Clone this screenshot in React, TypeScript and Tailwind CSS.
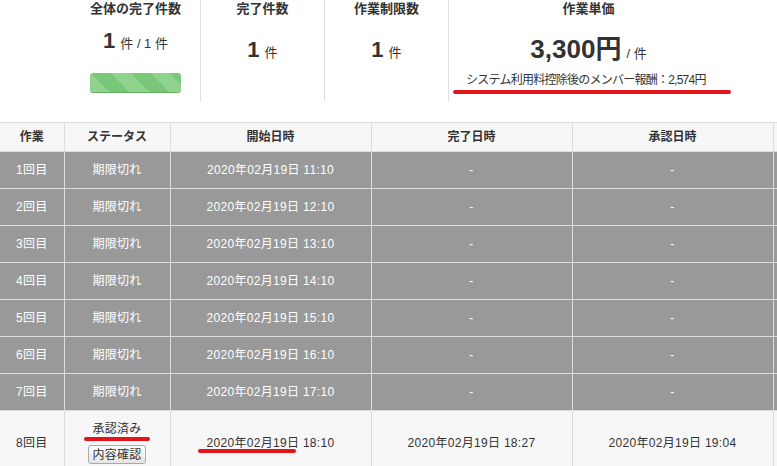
import React from "react";

const font = "font-['Liberation_Sans','Noto_Sans_CJK_JP',sans-serif]";

// rows that ran out of time
const expiredRows = [1, 2, 3, 4, 5, 6, 7].map((n) => ({
  label: `${n}回目`,
  start: `2020年02月19日 ${10 + n}:10`,
}));

function Metric({ title, children, className }: { title: string; children: React.ReactNode; className: string }) {
  return (
    <div className={`flex flex-col items-center h-[101px] ${className}`}>
      <div className="text-[13px] font-bold text-[#333] leading-[16px] mt-[1px]">{title}</div>
      {children}
    </div>
  );
}

function Summary() {
  return (
    <div className="flex pl-[71px] h-[122px]">
      <Metric title="全体の完了件数" className="w-[129px]">
        <div className="mt-[12px] flex items-baseline text-[#333] leading-[24px]">
          <span className="text-[22px] font-bold">1</span>
          <span className="text-[13px] ml-[5px]">件 / 1 件</span>
        </div>
        <div className="mt-[17px] w-[91px] h-[20px] rounded-[3px] border-b border-[#63ad63] bg-[image:repeating-linear-gradient(45deg,#8fd38f_0_14px,#79c879_14px_28px)]" />
      </Metric>
      <Metric title="完了件数" className="w-[124px] border-l border-[#dddddd]">
        <div className="mt-[21px] flex items-baseline text-[#333] leading-[24px]">
          <span className="text-[22px] font-bold">1</span>
          <span className="text-[13px] ml-[5px]">件</span>
        </div>
      </Metric>
      <Metric title="作業制限数" className="w-[124px] border-l border-[#dddddd]">
        <div className="mt-[21px] flex items-baseline text-[#333] leading-[24px]">
          <span className="text-[22px] font-bold">1</span>
          <span className="text-[13px] ml-[5px]">件</span>
        </div>
      </Metric>
      <Metric title="作業単価" className="w-[280px] border-l border-[#dddddd]">
        <div className="mt-[17px] flex items-baseline text-[#333] leading-[30px]">
          <span className="text-[26px] font-bold">3,300円</span>
          <span className="text-[13px] ml-[5px]">/ 件</span>
        </div>
        <div className="self-start ml-[4px] mt-[4px] flex flex-col">
          <span className="text-[12px] tracking-[-0.75px] text-[#333] leading-[14px] ml-[13px]">
            システム利用料控除後のメンバー報酬：2,574円
          </span>
          <span className="mt-[3px] h-[4px] w-[278px] rounded-full bg-[#e3141b]" />
        </div>
      </Metric>
    </div>
  );
}

export default function App() {
  const th = "border border-[#dddddd] bg-[#f7f7f7] text-[#333] font-bold text-[12px] h-[29px] p-0 text-center align-middle";
  const td = "border border-[#dddddd] text-[12px] tracking-[0.3px] h-[37px] p-0 text-center align-middle";
  return (
    <div className={`w-[777px] h-[466px] overflow-hidden bg-white ${font}`}>
      <Summary />
      <div className="w-[777px] overflow-hidden">
        <table className="table-fixed border-collapse w-[973px]">
          <colgroup>
            <col className="w-[64px]" />
            <col className="w-[106px]" />
            <col className="w-[201px]" />
            <col className="w-[201px]" />
            <col className="w-[201px]" />
            <col className="w-[200px]" />
          </colgroup>
          <thead>
            <tr>
              <th className={`${th} border-l-0`}>作業</th>
              <th className={th}>ステータス</th>
              <th className={th}>開始日時</th>
              <th className={th}>完了日時</th>
              <th className={th}>承認日時</th>
              <th className={th}></th>
            </tr>
          </thead>
          <tbody>
            {expiredRows.map((r) => (
              <tr key={r.label} className="bg-[#999999] text-white">
                <td className={`${td} border-l-0`}>{r.label}</td>
                <td className={td}>期限切れ</td>
                <td className={td}>{r.start}</td>
                <td className={td}>-</td>
                <td className={td}>-</td>
                <td className={td}></td>
              </tr>
            ))}
            <tr className="bg-[#f7f7f7] text-[#333]">
              <td className={`${td} border-l-0 h-[64px]`}>8回目</td>
              <td className={td}>
                <div className="flex flex-col items-center pt-[1px]">
                  <span className="leading-[14px]">承認済み</span>
                  <span className="mt-[1px] h-[4px] w-[66px] rounded-full bg-[#e3141b]" />
                  <button className="mt-[4px] px-[3px] h-[19px] leading-[16px] text-[12px] text-[#333] border border-[#aaaaaa] rounded-[3px] bg-gradient-to-b from-white to-[#e4e4e4]">
                    内容確認
                  </button>
                </div>
              </td>
              <td className={td}>
                <span className="relative inline-block">
                  2020年02月19日 18:10
                  <span className="absolute left-[-9px] top-[15px] h-[4px] w-[98px] rounded-full bg-[#e3141b]" />
                </span>
              </td>
              <td className={td}>2020年02月19日 18:27</td>
              <td className={td}>2020年02月19日 19:04</td>
              <td className={td}></td>
            </tr>
          </tbody>
        </table>
      </div>
    </div>
  );
}
